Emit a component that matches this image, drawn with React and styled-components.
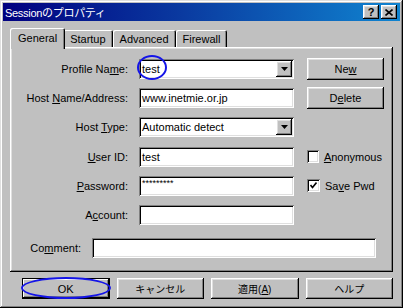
import React from "react";
import styled, { createGlobalStyle, css } from "styled-components";

const GlobalStyle = createGlobalStyle`
  html, body {
    margin: 0;
    padding: 0;
    background: #c0c0c0;
  }
  body {
    font-family: "Liberation Sans", "Noto Sans CJK JP", sans-serif;
    font-size: 11px;
    color: #000;
  }
`;

const raised = css`
  box-shadow: inset -1px -1px #000, inset 1px 1px #fff,
    inset -2px -2px #808080, inset 2px 2px #dfdfdf;
`;

const sunken = css`
  box-shadow: inset 1px 1px #808080, inset -1px -1px #fff,
    inset 2px 2px #000, inset -2px -2px #dfdfdf;
`;

const Window = styled.div`
  width: 403px;
  height: 308px;
  box-sizing: border-box;
  padding: 3px;
  background: #c0c0c0;
  display: flex;
  flex-direction: column;
  box-shadow: inset -1px -1px #000, inset 1px 1px #dfdfdf,
    inset -2px -2px #808080, inset 2px 2px #fff;
`;

const TitleBar = styled.div`
  height: 18px;
  display: flex;
  align-items: center;
  justify-content: space-between;
  padding: 0 3px 0 2px;
  background: linear-gradient(to right, #000080 0%, #0a3aa0 45%, #1084d0 100%);
  color: #fff;
  font-size: 11px;
`;

const TitleText = styled.span`
  letter-spacing: -0.3px;
`;

const TitleButtons = styled.div`
  display: flex;
  gap: 2px;
`;

const TitleButton = styled.div`
  width: 16px;
  height: 14px;
  background: #c0c0c0;
  color: #000;
  display: flex;
  align-items: center;
  justify-content: center;
  font-weight: bold;
  font-size: 11px;
  ${raised}
`;

const Content = styled.div`
  flex: 1;
  display: flex;
  flex-direction: column;
  padding: 7px 7px 0 7px;
`;

const TabStrip = styled.div`
  display: flex;
  align-items: flex-end;
  height: 19px;
  padding-left: 2px;
  position: relative;
  z-index: 1;
`;

const Tab = styled.div`
  height: ${(p) => (p.$active ? "21px" : "17px")};
  margin: ${(p) => (p.$active ? "0 -2px -2px -2px" : "0")};
  padding: ${(p) => (p.$active ? "0 8px" : "0 7px")};
  box-sizing: border-box;
  display: flex;
  align-items: ${(p) => (p.$active ? "flex-start" : "center")};
  padding-top: ${(p) => (p.$active ? "4px" : "1px")};
  background: #c0c0c0;
  border-radius: 2px 2px 0 0;
  position: relative;
  z-index: ${(p) => (p.$active ? 2 : 0)};
  box-shadow: inset 1px 1px #fff, inset -1px 0 #000, inset -2px 0 #808080;
`;

const Panel = styled.div`
  width: 383px;
  height: 225px;
  box-sizing: border-box;
  padding-top: 12px;
  ${raised}
`;

const FormGrid = styled.div`
  display: grid;
  grid-template-columns: 118px 155px 77px;
  grid-auto-rows: 20px;
  column-gap: 11px;
  row-gap: 9.2px;
  align-items: center;
  & > :nth-child(3n) {
    margin-left: 2px;
  }
`;

const Label = styled.label`
  text-align: right;
  white-space: nowrap;
`;

const Key = styled.span`
  text-decoration: underline;
  text-underline-offset: 1px;
`;

const Field = styled.div`
  position: relative;
  height: 20px;
  box-sizing: border-box;
  background: #fff;
  display: flex;
  align-items: center;
  padding: 0 3px;
  white-space: nowrap;
  overflow: visible;
  ${sunken}
`;

const Stars = styled.span`
  font-size: 9px;
  align-self: flex-start;
  margin-top: 2px;
`;

const DropButton = styled.div`
  position: absolute;
  right: 2px;
  top: 2px;
  width: 16px;
  height: 16px;
  background: #c0c0c0;
  display: flex;
  align-items: center;
  justify-content: center;
  ${raised}
`;

const Ring = styled.div`
  position: absolute;
  left: ${(p) => p.$left}px;
  top: ${(p) => p.$top}px;
  width: ${(p) => p.$w}px;
  height: ${(p) => p.$h}px;
  box-sizing: border-box;
  border: 2px solid #1414e8;
  border-radius: 50%;
  pointer-events: none;
`;

const Button = styled.div`
  position: relative;
  width: ${(p) => p.$w || 77}px;
  height: ${(p) => p.$h || 22}px;
  box-sizing: border-box;
  background: #c0c0c0;
  display: flex;
  align-items: center;
  justify-content: center;
  white-space: nowrap;
  ${(p) =>
    p.$default
      ? css`
          box-shadow: inset 0 0 0 1px #000, inset -2px -2px #000,
            inset 2px 2px #fff, inset -3px -3px #808080;
        `
      : raised}
`;

const Check = styled.div`
  display: flex;
  align-items: center;
  gap: 5px;
  margin-left: -3px;
`;

const Box = styled.div`
  width: 13px;
  height: 13px;
  box-sizing: border-box;
  background: #fff;
  display: flex;
  align-items: center;
  justify-content: center;
  ${sunken}
`;

const CommentRow = styled.div`
  display: flex;
  align-items: center;
  gap: 11px;
  margin-top: 13px;
`;

const CommentLabel = styled(Label)`
  width: 71px;
`;

const ButtonRow = styled.div`
  display: flex;
  gap: 7px;
  padding: 6px 0 0 12px;
`;

const Jp = styled.span`
  font-size: 10px;
`;

const Arrow = () => (
  <svg width="7" height="4" viewBox="0 0 7 4">
    <path d="M0 0h7L3.5 4z" fill="#000" />
  </svg>
);

const Combo = ({ value, children }) => (
  <Field>
    {value}
    <DropButton>
      <Arrow />
    </DropButton>
    {children}
  </Field>
);

export default function App() {
  return (
    <>
      <GlobalStyle />
      <Window>
        <TitleBar>
          <TitleText>Sessionのプロパティ</TitleText>
          <TitleButtons>
            <TitleButton>?</TitleButton>
            <TitleButton>
              <svg width="8" height="7" viewBox="0 0 8 7">
                <path d="M0.5 0.5l7 6M7.5 0.5l-7 6" stroke="#000" strokeWidth="1.6" />
              </svg>
            </TitleButton>
          </TitleButtons>
        </TitleBar>
        <Content>
          <TabStrip>
            <Tab $active>General</Tab>
            <Tab>Startup</Tab>
            <Tab>Advanced</Tab>
            <Tab>Firewall</Tab>
          </TabStrip>
          <Panel>
            <FormGrid>
              <Label>
                Profile Na<Key>m</Key>e:
              </Label>
              <Combo value="test">
                <Ring $left={-2} $top={-4} $w={30} $h={25} />
              </Combo>
              <Button>
                Ne<Key>w</Key>
              </Button>

              <Label>
                Host <Key>N</Key>ame/Address:
              </Label>
              <Field>www.inetmie.or.jp</Field>
              <Button>
                D<Key>e</Key>lete
              </Button>

              <Label>
                Host <Key>T</Key>ype:
              </Label>
              <Combo value="Automatic detect" />
              <span />

              <Label>
                <Key>U</Key>ser ID:
              </Label>
              <Field>test</Field>
              <Check>
                <Box />
                <span>
                  <Key>A</Key>nonymous
                </span>
              </Check>

              <Label>
                <Key>P</Key>assword:
              </Label>
              <Field>
                <Stars>*********</Stars>
              </Field>
              <Check>
                <Box>
                  <svg width="7" height="7" viewBox="0 0 7 7">
                    <path d="M0.5 3l2 2.5L6.5 0.5" stroke="#000" strokeWidth="1.6" fill="none" />
                  </svg>
                </Box>
                <span>
                  Sa<Key>v</Key>e Pwd
                </span>
              </Check>

              <Label>
                A<Key>c</Key>count:
              </Label>
              <Field />
              <span />
            </FormGrid>
            <CommentRow>
              <CommentLabel>
                Co<Key>m</Key>ment:
              </CommentLabel>
              <Field style={{ width: 284 }} />
            </CommentRow>
          </Panel>
          <ButtonRow>
            <Button $w={88} $h={21} $default>
              OK
              <Ring $left={-1} $top={-1} $w={90} $h={22} />
            </Button>
            <Button $w={88} $h={21}>
              <Jp>キャンセル</Jp>
            </Button>
            <Button $w={88} $h={21}>
              <Jp>
                適用(<Key>A</Key>)
              </Jp>
            </Button>
            <Button $w={88} $h={21}>
              <Jp>ヘルプ</Jp>
            </Button>
          </ButtonRow>
        </Content>
      </Window>
    </>
  );
}
